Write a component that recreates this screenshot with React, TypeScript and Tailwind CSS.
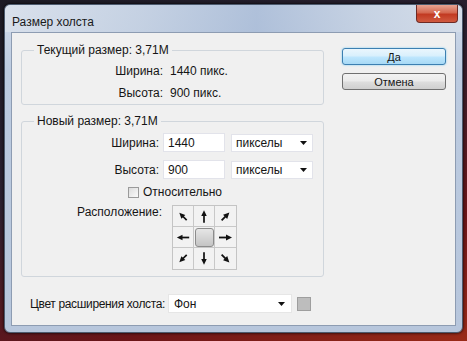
import React from 'react';

const font = { fontFamily: '"Liberation Sans", Arial, sans-serif' };

function Caret() {
  return (
    <svg width="7" height="4" viewBox="0 0 7 4" className="shrink-0">
      <path d="M0 0 L7 0 L3.5 4 Z" fill="#111" />
    </svg>
  );
}

function Arrow({ deg }: { deg: number }) {
  const diag = deg % 90 !== 0;
  const tip = diag ? 5 : 4;
  const tail = diag ? 16 : 17;
  return (
    <svg width="21" height="21" viewBox="0 0 21 21">
      <g transform={`rotate(${deg} 10.5 10.5)`}>
        <line x1="10.5" y1={tail} x2="10.5" y2={tip + 4} stroke="#111" strokeWidth="1.8" />
        <path d={`M10.5 ${tip} L7.6 ${tip + 6} L13.4 ${tip + 6} Z`} fill="#111" />
      </g>
    </svg>
  );
}

// anchor grid cells, row by row; null marks the selected centre
const cells: (number | null)[] = [-45, 0, 45, -90, null, 90, -135, 180, 135];

function InputRow({ label, value }: { label: string; value: string }) {
  return (
    <div className="flex items-center h-[19px]">
      <div className="w-[141px] text-right pr-[4px]">{label}</div>
      <div className="w-[62px] h-[19px] bg-white border border-[#e2e3ea] flex items-center px-[4px]">{value}</div>
      <div className="ml-[6px] w-[82px] h-[18px] bg-white border border-[#e2e3ea] flex items-center justify-between pl-[4px] pr-[5px]">
        <span>пикселы</span>
        <Caret />
      </div>
    </div>
  );
}

export default function App() {
  return (
    <div
      className="w-[467px] h-[341px] overflow-hidden pt-[4px] pl-[4px] bg-[linear-gradient(160deg,#1c1a24_0%,#2a2030_40%,#6a1418_75%,#9a2a18_100%)]"
      style={font}
    >
      <div className="w-[459px] h-[329px] rounded-[6px] border border-[#4c5a6e] bg-[linear-gradient(180deg,#d3dceb_0%,#bccbe0_20%,#b7c6dc_100%)] flex flex-col shadow-[0_0_3px_#000]">
        {/* title bar */}
        <div className="h-[27px] flex items-start relative">
          <div className="absolute inset-0 rounded-t-[6px] bg-[linear-gradient(90deg,#dbe2ec_0%,#c2cfe1_30%,#a7bad6_55%,#c5d1e2_80%,#d6dee9_100%)] opacity-80" />
          <div className="relative pl-[7px] pt-[10px] text-[12px] leading-[14px] text-[#1a1a1a]">Размер холста</div>
          <div className="relative ml-auto mr-[4px] w-[42px] h-[18px] rounded-b-[4px] border border-[#6e2a24] border-t-0 bg-[linear-gradient(180deg,#e7a392_0%,#d46850_45%,#c23a22_55%,#d05a40_100%)] flex items-center justify-center">
            <span className="text-white text-[12px] font-bold leading-none">x</span>
          </div>
        </div>
        {/* client area */}
        <div className="mx-[6px] mb-[6px] flex-1 bg-[#f0f0f0] border border-[#8d9cb2] text-[12px] leading-[14px] text-[#151515]">
          <div className="flex pt-[10px]">
            <div className="ml-[9px] w-[303px]">
              <fieldset className="border border-[#d0d6dc] rounded-[3px] pb-[3px]">
                <legend className="ml-[12px] px-[3px]">Текущий размер: 3,71M</legend>
                <div className="flex h-[16px] items-center mt-[6px]">
                  <div className="w-[141px] text-right">Ширина:</div>
                  <div className="ml-[7px]">1440 пикс.</div>
                </div>
                <div className="flex h-[16px] items-center mt-[6px]">
                  <div className="w-[141px] text-right">Высота:</div>
                  <div className="ml-[7px]">900 пикс.</div>
                </div>
              </fieldset>
              <fieldset className="mt-[9px] border border-[#d0d6dc] rounded-[3px] pb-[6px]">
                <legend className="ml-[12px] px-[3px]">Новый размер: 3,71M</legend>
                <div className="mt-[5px]">
                  <InputRow label="Ширина:" value="1440" />
                </div>
                <div className="mt-[8px]">
                  <InputRow label="Высота:" value="900" />
                </div>
                <div className="mt-[6px] h-[14px] flex items-center pl-[106px]">
                  <div className="w-[11px] h-[11px] border border-[#9a9a9a] bg-[linear-gradient(135deg,#dcdcdc,#fafafa)]" />
                  <span className="ml-[4px]">Относительно</span>
                </div>
                <div className="mt-[6px] flex items-start">
                  <div className="w-[141px] text-right pr-[1px]">Расположение:</div>
                  <div className="ml-[9px] grid grid-cols-[21px_21px_21px] border border-[#c4c4c4] bg-[#f2f2f2]">
                    {cells.map((c, i) => (
                      <div
                        key={i}
                        className={`w-[21px] h-[21px] flex items-center justify-center ${i % 3 !== 2 ? 'border-r border-[#c8c8c8]' : ''} ${i < 6 ? 'border-b border-[#c8c8c8]' : ''}`}
                      >
                        {c === null ? (
                          <div className="w-[19px] h-[19px] rounded-[3px] border border-[#8c8c8c] bg-[linear-gradient(180deg,#e6e6e6,#c4c4c4)]" />
                        ) : (
                          <Arrow deg={c} />
                        )}
                      </div>
                    ))}
                  </div>
                </div>
              </fieldset>
            </div>
            <div className="ml-[18px] w-[104px] pt-[5px] flex flex-col gap-[8px]">
              <div className="h-[17px] rounded-[3px] border border-[#3c7fb1] bg-[linear-gradient(180deg,#eaf6fd_0%,#d9f0fc_45%,#bee6fd_55%,#a7d9f5_100%)] shadow-[0_0_2px_#6cc4f0] flex items-center justify-center text-[11px]">
                Да
              </div>
              <div className="h-[17px] rounded-[3px] border border-[#707070] bg-[linear-gradient(180deg,#f2f2f2_0%,#ebebeb_45%,#dddddd_55%,#cfcfcf_100%)] flex items-center justify-center text-[11px]">
                Отмена
              </div>
            </div>
          </div>
          <div className="mt-[17px] pl-[18px] flex items-center h-[19px]">
            <div className="w-[134px] whitespace-nowrap tracking-[-0.35px]">Цвет расширения холста:</div>
            <div className="ml-[4px] w-[124px] h-[19px] bg-white border border-[#e6e6e6] flex items-center justify-between pl-[5px] pr-[6px]">
              <span>Фон</span>
              <Caret />
            </div>
            <div className="ml-[5px] w-[14px] h-[14px] bg-[#bdbdbd] border border-[#9e9e9e]" />
          </div>
        </div>
      </div>
    </div>
  );
}
